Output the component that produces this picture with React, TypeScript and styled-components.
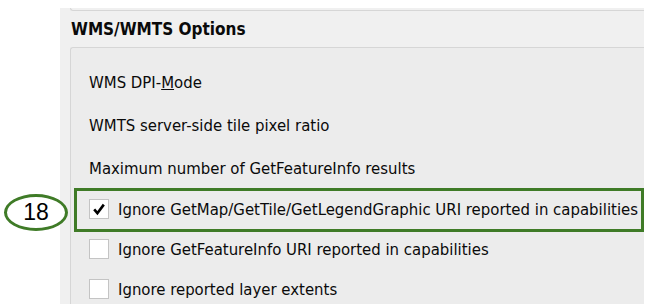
import { createGlobalStyle, styled } from 'styled-components'

const GlobalStyle = createGlobalStyle`
    html, body {
        margin: 0;
        padding: 0;
        background: #ffffff;
    }
    body {
        width: 649px;
        height: 304px;
        overflow: hidden;
        font-family: "DejaVu Sans Condensed", "DejaVu Sans", sans-serif;
        color: #0a0a0a;
    }
    #root {
        padding-top: 8px;
    }
`

const StyledPanel = styled.section`
    margin-left: 60px;
    width: 584px;
    height: 296px;
    background: #f0f0f0;
    padding-left: 10px;
    box-sizing: border-box;
    display: flex;
    flex-direction: column;
`

const StyledPrevBox = styled.div`
    height: 2px;
    border-left: 1px solid #d6d6d6;
    border-bottom: 1px solid #d6d6d6;
    border-bottom-left-radius: 3px;
`

const StyledTitle = styled.h2`
    margin: 0;
    height: 36px;
    padding-left: 1px;
    display: flex;
    align-items: center;
    font-size: 17px;
    font-weight: 700;
`

const StyledGroup = styled.div`
    flex: 1;
    border-top: 1px solid #d6d6d6;
    border-left: 1px solid #d6d6d6;
    border-top-left-radius: 3px;
    background: #ececec;
    padding-top: 23px;
`

const StyledRow = styled.div<{ $gap: number; $highlight?: boolean }>`
    position: relative;
    display: flex;
    align-items: center;
    gap: 9px;
    height: 22px;
    margin-top: ${p => p.$gap}px;
    padding-left: 18px;
    font-size: 16.6px;
    white-space: nowrap;

    ${p => p.$highlight && `
        &::after {
            content: '';
            position: absolute;
            left: 3px;
            right: 0;
            top: -10px;
            bottom: -12px;
            border: 3px solid #3f7b27;
        }
    `}
`

const StyledCheckBox = styled.span`
    flex: none;
    width: 20px;
    height: 20px;
    box-sizing: border-box;
    border: 1px solid #c4c4c4;
    background: #ffffff;
    display: flex;
    align-items: center;
    justify-content: center;
`

const StyledCallout = styled.div`
    position: absolute;
    left: -67px;
    top: -4px;
    width: 64px;
    height: 37px;
    box-sizing: border-box;
    border: 3px solid #3f7b27;
    border-radius: 50%;
    background: #ffffff;
    display: flex;
    align-items: center;
    justify-content: center;
    font-family: "Liberation Sans", Arial, sans-serif;
    font-size: 23px;
    color: #000000;
`

function CheckBox({ checked }: { checked?: boolean }) {
    return (
        <StyledCheckBox>
            {checked && (
                <svg width="14" height="14" viewBox="0 0 14 14">
                    <path d="M2.2 7.4 L5.4 11.2 L11.8 2.6" fill="none" stroke="#000" strokeWidth="2.6" />
                </svg>
            )}
        </StyledCheckBox>
    )
}

export default function App() {
    return (
        <>
            <GlobalStyle />
            <StyledPanel>
                <StyledPrevBox />
                <StyledTitle>WMS/WMTS Options</StyledTitle>
                <StyledGroup>
                    <StyledRow $gap={0}>
                        <span>WMS DPI-<u>M</u>ode</span>
                    </StyledRow>
                    <StyledRow $gap={21}>
                        <span>WMTS server-side tile pixel ratio</span>
                    </StyledRow>
                    <StyledRow $gap={21}>
                        <span>Maximum number of GetFeatureInfo results</span>
                    </StyledRow>
                    <StyledRow $gap={19} $highlight>
                        <StyledCallout>18</StyledCallout>
                        <CheckBox checked />
                        <span>Ignore GetMap/GetTile/GetLegendGraphic URI reported in capabilities</span>
                    </StyledRow>
                    <StyledRow $gap={18}>
                        <CheckBox />
                        <span>Ignore GetFeatureInfo URI reported in capabilities</span>
                    </StyledRow>
                    <StyledRow $gap={18}>
                        <CheckBox />
                        <span>Ignore reported layer extents</span>
                    </StyledRow>
                </StyledGroup>
            </StyledPanel>
        </>
    )
}
